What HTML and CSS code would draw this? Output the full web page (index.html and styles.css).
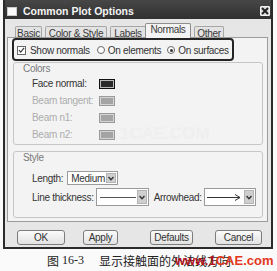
FILE: index.html
```html
<!DOCTYPE html>
<html>
<head>
<meta charset="utf-8">
<link rel="stylesheet" href="styles.css">
</head>
<body>
<div class="page">
  <div class="dialog">
    <div class="titlebar">
      <span class="ticon"></span>
      <span class="title">Common Plot Options</span>
      <span class="close"><svg width="8" height="8" viewBox="0 0 8 8"><path d="M1 1L7 7M7 1L1 7" stroke="#222" stroke-width="2"/></svg></span>
    </div>
    <div class="tabs">
      <div class="tab t-basic">Basic</div>
      <div class="tab t-cs">Color &amp; Style</div>
      <div class="tab t-labels">Labels</div>
      <div class="tab t-normals sel">Normals</div>
      <div class="tab t-other">Other</div>
    </div>
    <div class="panel">
      <div class="hl">
        <span class="check"><svg width="8" height="8" viewBox="0 0 8 8"><path d="M1 4L3 6.5L7 1.5" stroke="#333" stroke-width="1.3" fill="none"/></svg></span>
        <span class="opt-show">Show normals</span>
        <span class="radio r-elem"></span>
        <span class="opt-elem">On elements</span>
        <span class="radio on r-surf"></span>
        <span class="opt-surf">On surfaces</span>
      </div>
      <div class="group colors">
        <div class="glabel">Colors</div>
        <div class="crow"><span class="clabel">Face normal:</span><span class="swatch dark"></span></div>
        <div class="crow off"><span class="clabel">Beam tangent:</span><span class="swatch"></span></div>
        <div class="crow off"><span class="clabel">Beam n1:</span><span class="swatch"></span></div>
        <div class="crow off"><span class="clabel">Beam n2:</span><span class="swatch"></span></div>
      </div>
      <div class="group style">
        <div class="glabel">Style</div>
        <div class="srow r1">
          <span class="slabel">Length:</span>
          <div class="combo c-len"><span class="ctext">Medium</span><span class="arr"><svg width="6" height="5" viewBox="0 0 6 5"><path d="M0.5 1L3 3.8L5.5 1" stroke="#333" stroke-width="1.4" fill="none"/></svg></span></div>
        </div>
        <div class="srow r2">
          <span class="slabel">Line thickness:</span>
          <div class="combo c-thk"><span class="cline"></span><span class="arr"><svg width="6" height="5" viewBox="0 0 6 5"><path d="M0.5 1L3 3.8L5.5 1" stroke="#333" stroke-width="1.4" fill="none"/></svg></span></div>
          <span class="slabel l-arrow">Arrowhead:</span>
          <div class="combo c-arr"><svg class="arrowline" width="34" height="7" viewBox="0 0 34 7"><path d="M0 3.5H33M28 0.5L33 3.5L28 6.5" stroke="#333" stroke-width="1" fill="none"/></svg><span class="arr"><svg width="6" height="5" viewBox="0 0 6 5"><path d="M0.5 1L3 3.8L5.5 1" stroke="#333" stroke-width="1.4" fill="none"/></svg></span></div>
        </div>
      </div>
      <div class="wm">1CAE.COM</div>
    </div>
    <div class="buttons">
      <div class="btn b-ok">OK</div>
      <div class="btn b-apply">Apply</div>
      <div class="btn b-def">Defaults</div>
      <div class="btn b-cancel">Cancel</div>
    </div>
  </div>
  <div class="caption">
    <span class="fig">图</span><span class="num">16-3</span><span class="ctxt">显示接触面的外法线方向</span>
    <span class="site"><span class="s1">www.1</span><span class="s2">CAE.com</span></span>
  </div>
</div>
</body>
</html>
```

FILE: styles.css
```css
* { box-sizing: border-box; }
body {
  margin: 0;
  background: #fafafa;
  font-family: "Liberation Sans", Arial, sans-serif;
  font-size: 10px;
  color: #333;
  letter-spacing: -0.3px;
}
.page {
  width: 277px;
  height: 271px;
  padding-left: 3px;
}
.dialog {
  width: 270px;
  height: 249px;
  border: 2px solid #2b2b2b;
  border-top: 0;
  background: #e6e6e6;
  display: flex;
  flex-direction: column;
}
.titlebar {
  height: 19px;
  flex: none;
  background: linear-gradient(#474747, #303030);
  display: flex;
  align-items: center;
  padding: 3px 1px 0 2px;
}
.ticon {
  width: 10px;
  height: 9px;
  background: #fafafa;
  border: 1px solid #ccc;
}
.title {
  margin-left: 6px;
  color: #f4f4f4;
  font-weight: bold;
  font-size: 10.5px;
  letter-spacing: 0;
}
.close {
  margin-left: auto;
  width: 10px;
  height: 10px;
  background: #dcdcdc;
  border: 1px solid #f2f2f2;
  border-radius: 1px;
  display: flex;
  align-items: center;
  justify-content: center;
}
.tabs {
  height: 14px;
  flex: none;
  margin-top: 4px;
  padding-left: 10px;
  display: flex;
  align-items: flex-end;
  position: relative;
  z-index: 1;
}
.tab {
  height: 11px;
  border: 1px solid #a6a6a6;
  border-bottom: 0;
  border-radius: 2px 2px 0 0;
  background: #e3e3e3;
  text-align: center;
  line-height: 13px;
  color: #3a3a3a;
  white-space: nowrap;
}
.t-basic { width: 27px; }
.t-cs { width: 62px; margin-left: 3px; }
.t-labels { width: 36px; margin-left: 3px; }
.t-normals { width: 46px; margin-left: -1px; }
.t-other { width: 30px; margin-left: 3px; }
.tab.sel {
  height: 15px;
  margin-bottom: -1px;
  background: #f3f3f3;
  border-color: #8e8e8e;
  line-height: 12px;
}
.panel {
  height: 185px;
  flex: none;
  margin: 0 3px 0 2px;
  border: 1px solid #9c9c9c;
  background: #f3f3f3;
  position: relative;
}
.hl {
  width: 222px;
  height: 23px;
  margin-left: 4px;
  border: 2px solid #242424;
  border-radius: 4px;
  display: flex;
  align-items: center;
  padding-left: 3px;
  padding-top: 1px;
  position: relative;
  z-index: 1;
}
.check {
  width: 9px;
  height: 9px;
  border: 1px solid #666;
  background: #fff;
  display: flex;
  align-items: center;
  justify-content: center;
}
.opt-show { margin-left: 4px; }
.radio {
  width: 8px;
  height: 8px;
  border: 1px solid #666;
  border-radius: 50%;
  background: #fff;
  position: relative;
}
.radio.on::after {
  content: "";
  position: absolute;
  left: 1.5px;
  top: 1.5px;
  width: 3px;
  height: 3px;
  border-radius: 50%;
  background: #333;
}
.r-elem { margin-left: 7px; }
.opt-elem { margin-left: 3px; }
.r-surf { margin-left: 6px; }
.opt-surf { margin-left: 3px; }
.group {
  width: 250px;
  margin-left: 5px;
  border: 1px solid #c6c6c6;
  border-radius: 3px;
  padding-left: 9px;
}
.colors {
  height: 83px;
  margin-top: 1px;
}
.style {
  height: 67px;
  margin-top: 6px;
}
.glabel {
  height: 12px;
  line-height: 12px;
  color: #7a7a7a;
}
.crow {
  height: 17px;
  display: flex;
  align-items: center;
  padding-left: 9px;
}
.clabel { width: 67px; }
.crow.off .clabel { color: #adadad; }
.swatch {
  width: 16px;
  height: 10px;
  border: 1px solid #9a9a9a;
  background: #a4a4a4;
  box-shadow: inset 0 0 0 1px #d4d4d4;
}
.swatch.dark {
  border: 1px solid #111;
  background: #2a2a2a;
  box-shadow: inset 0 0 0 1px #bbb;
}
.srow {
  display: flex;
  align-items: center;
  padding-left: 9px;
}
.r1 { height: 16px; margin-top: 6px; }
.r2 { height: 18px; margin-top: 2px; }
.slabel { color: #333; }
.combo {
  background: #fff;
  border: 1px solid #9a9a9a;
  display: flex;
  align-items: center;
  padding: 1px;
}
.c-len { width: 51px; height: 14px; margin-left: 4px; }
.c-thk { width: 53px; height: 18px; margin-left: 2px; }
.c-arr { width: 52px; height: 18px; margin-left: 2px; }
.l-arrow { margin-left: 5px; }
.ctext { margin-left: 2px; }
.cline {
  width: 36px;
  height: 1px;
  margin-left: 2px;
  background: #555;
}
.arrowline { margin-left: 1px; }
.arr {
  margin-left: auto;
  width: 10px;
  height: 100%;
  background: #cfcfcf;
  border: 1px solid #b4b4b4;
  display: flex;
  align-items: center;
  justify-content: center;
}
.wm {
  position: absolute;
  left: 112px;
  top: 86px;
  font-size: 17px;
  font-weight: bold;
  color: #efefef;
  letter-spacing: 0;
}
.buttons {
  height: 15px;
  margin-top: 8px;
  display: flex;
}
.btn {
  height: 15px;
  border: 1px solid #7c7c7c;
  border-radius: 3px;
  background: linear-gradient(#fbfbfb, #e2e2e2);
  text-align: center;
  line-height: 14px;
  color: #333;
}
.b-ok { width: 48px; margin-left: 12px; }
.b-apply { width: 35px; margin-left: 18px; }
.b-def { width: 43px; margin-left: 32px; }
.b-cancel { width: 47px; margin-left: 22px; }
.caption {
  position: relative;
  height: 19px;
  margin-top: 2px;
  padding-left: 44px;
  display: flex;
  align-items: center;
  font-family: "Noto Sans CJK SC", sans-serif;
  font-size: 12px;
  color: #222;
  letter-spacing: 0;
}
.num {
  margin-left: 3px;
  font-family: "Liberation Serif", serif;
  font-size: 12px;
}
.ctxt { margin-left: 15px; }
.site {
  position: absolute;
  left: 172px;
  top: 2px;
  font-family: "Liberation Sans", Arial, sans-serif;
  font-weight: bold;
  font-size: 13px;
  letter-spacing: 0;
}
.s1 { color: #b3121c; }
.s2 { color: #e4361a; }
```
